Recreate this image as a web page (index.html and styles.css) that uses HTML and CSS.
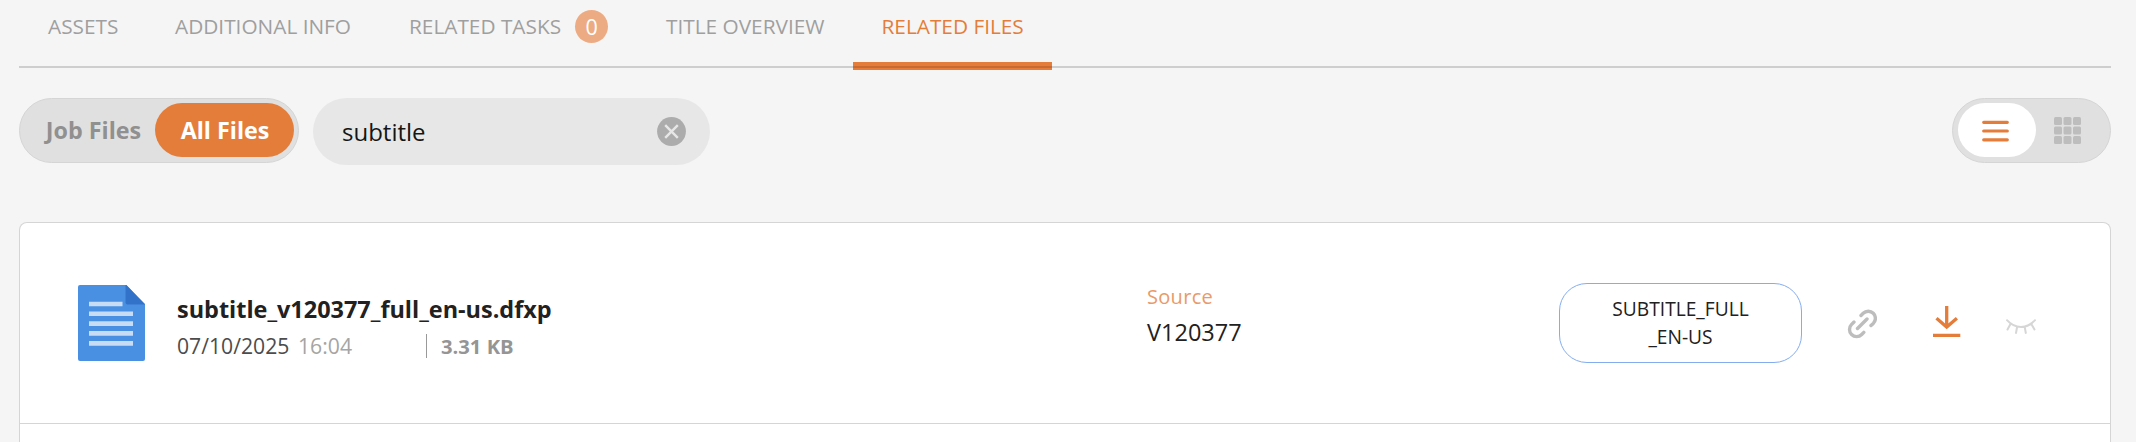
FILE: index.html
```html
<!DOCTYPE html>
<html lang="en">
<head>
<meta charset="utf-8">
<title>Related files</title>
<link rel="stylesheet" href="styles.css">
</head>
<body>
<nav class="tabs">
  <a class="tab tab-assets">ASSETS</a>
  <a class="tab tab-info">ADDITIONAL INFO</a>
  <a class="tab tab-tasks">RELATED TASKS <span class="badge">0</span></a>
  <a class="tab tab-overview">TITLE OVERVIEW</a>
  <a class="tab tab-files active">RELATED FILES</a>
</nav>
<div class="toolbar">
  <div class="scope">
    <button class="scope-option">Job Files</button>
    <button class="scope-option selected">All Files</button>
  </div>
  <div class="search">
    <span class="search-text">subtitle</span>
    <svg class="clear" viewBox="0 0 29 29"><circle cx="14.5" cy="14.5" r="14.4" fill="#acacac"/><path d="M8.2 8.2l12.6 12.6M20.8 8.2L8.2 20.8" stroke="#e7e7e7" stroke-width="2.4"/></svg>
  </div>
  <div class="view">
    <span class="view-list"><svg width="27" height="27" viewBox="0 0 27 27"><path d="M1.7 5.3h23.6M1.7 14h23.6M1.7 22.8h23.6" stroke="#e47d3a" stroke-width="3.2" stroke-linecap="round"/></svg></span>
    <span class="view-grid"><svg width="27" height="27" viewBox="0 0 27 27" fill="#bdbdbd"><rect x="0" y="0" width="8" height="8" rx="1.5"/><rect x="9.5" y="0" width="8" height="8" rx="1.5"/><rect x="19" y="0" width="8" height="8" rx="1.5"/><rect x="0" y="9.5" width="8" height="8" rx="1.5"/><rect x="9.5" y="9.5" width="8" height="8" rx="1.5"/><rect x="19" y="9.5" width="8" height="8" rx="1.5"/><rect x="0" y="19" width="8" height="8" rx="1.5"/><rect x="9.5" y="19" width="8" height="8" rx="1.5"/><rect x="19" y="19" width="8" height="8" rx="1.5"/></svg></span>
  </div>
</div>
<main class="files">
  <article class="file">
    <svg class="doc" viewBox="0 0 67 76"><path d="M2 0h46l19 19v55a2 2 0 0 1-2 2H2a2 2 0 0 1-2-2V2a2 2 0 0 1 2-2z" fill="#4a90e2"/><path d="M47.500 0H48.500L67 19.500H49.500a2 2 0 0 1-2-2z" fill="#3272c9"/><path d="M11 19h33.500M11 28.800h44M11 38.600h44M11 48.400h44M11 58.400h44" stroke="#c8dcf5" stroke-width="4.600"/></svg>
    <div class="info">
      <div class="name">subtitle_v120377_full_en-us.dfxp</div>
      <div class="meta"><span class="date">07/10/2025</span><span class="time">16:04</span><span class="size">3.31 KB</span></div>
    </div>
    <div class="source">
      <div class="source-label">Source</div>
      <div class="source-value">V120377</div>
    </div>
    <div class="chip">SUBTITLE_FULL<br>_EN-US</div>
    <div class="actions">
      <svg class="link" width="30" height="30" viewBox="0 0 30 30" fill="none" stroke="#bdbdbd" stroke-width="3.4" stroke-linecap="round"><path d="M10.500 19.500L20 10M14 6.500l2.200-2.200a7.100 7.100 0 0 1 10.100 10.100l-2.300 2.100M16.800 23.400l-2.100 2.100A7.100 7.100 0 0 1 4.600 15.400l2.400-2.300"/></svg>
      <svg class="download" width="28" height="32" viewBox="0 0 28 32" fill="none" stroke="#e47d3a" stroke-width="3.300"><path d="M13.700 0v21M3.500 12.300l10.200 8.700 10.200-8.700M0 29.300h27.300"/></svg>
      <svg class="hidden-eye" width="30" height="16" viewBox="0 0 30 16" fill="none" stroke="#d6d6d6" stroke-width="2" stroke-linecap="round"><path d="M1 1.200C9 10.200 21 10.200 29 1.200M4.500 5l-3 5.500M11 8.500l-1 5.500M18.800 8.500l1 5.500M25.300 5l3.200 5.500"/></svg>
    </div>
  </article>
</main>
</body>
</html>
```
FILE: styles.css
```css
* { box-sizing: border-box; }
body {
  margin: 0;
  height: 442px;
  overflow: hidden;
  padding: 0 25px 0 19px;
  background: #f5f5f5;
  color: #212121;
  font-family: "Open Sans", "Noto Sans", sans-serif;
}
.tabs {
  display: flex;
  height: 68px;
  border-bottom: 2px solid #cecece;
  color: #9f9f9f;
  font-size: 20.8px;
  line-height: 52px;
  white-space: nowrap;
}
.tab { display: flex; align-items: flex-start; }
.tab-assets { width: 127px; padding-left: 29px; }
.tab-info { width: 234px; padding-left: 29px; }
.tab-tasks { width: 257px; padding-left: 29px; }
.tab-overview { width: 216px; padding-left: 29px; }
.tab-files { width: 199px; padding-left: 28.500px; }
.tab.active {
  height: 70px;
  color: #e47d3a;
  background: linear-gradient(#e47d3a 0 4px, #c96b31 4px 6px, #e47d3a 6px 8px) no-repeat 0 100% / 100% 8px;
}
.badge {
  width: 33px;
  height: 33px;
  margin: 10px 0 0 14px;
  border-radius: 50%;
  background: #edab83;
  color: #fff;
  font-size: 21.500px;
  line-height: 34px;
  text-align: center;
}
.toolbar { display: flex; margin-top: 30px; height: 67px; }
.scope {
  display: flex;
  width: 280px;
  height: 65px;
  padding: 4px;
  border: 1px solid #d5d5d5;
  border-radius: 33px;
  background: #e0e0e0;
}
.scope-option {
  width: 131px;
  height: 54px;
  padding: 0 0 0 8px;
  border: 0;
  border-radius: 27px;
  background: none;
  color: #909090;
  font: 700 23.300px "Open Sans", "Noto Sans", sans-serif;
  white-space: nowrap;
}
.scope-option.selected { width: 139px; padding-left: 1px; background: #e47d3a; color: #fff; }
.search {
  display: flex;
  align-items: center;
  justify-content: space-between;
  width: 397px;
  margin-left: 14px;
  padding: 0 24px 0 29px;
  border-radius: 34px;
  background: #e7e7e7;
  color: #151515;
  font-size: 24px;
}
.clear { width: 29px; height: 29px; }
.view {
  display: flex;
  width: 159px;
  height: 65px;
  margin-left: auto;
  padding: 4px 5px;
  border: 1px solid #d5d5d5;
  border-radius: 33px;
  background: #e0e0e0;
}
.view span { display: flex; align-items: center; justify-content: center; height: 54px; }
.view .view-list { width: 78px; padding-right: 3px; border-radius: 27px; background: #fff; }
.view-grid { width: 63px; }
.files {
  height: 240px;
  margin-top: 57px;
  border: 1px solid #d5d5d5;
  border-bottom: 0;
  border-radius: 8px 8px 0 0;
  background: #fff;
}
.file { display: flex; height: 201px; padding-left: 58px; border-bottom: 1px solid #d5d5d5; }
.doc { width: 67px; height: 76px; margin-top: 62px; }
.info { width: 1002px; padding: 69px 0 0 32px; }
.name { font-size: 23.450px; font-weight: 700; line-height: 34px; }
.meta { display: flex; align-items: center; margin-top: 8px; font-size: 21.200px; line-height: 24px; color: #4c4c4c; }
.date { width: 121px; }
.time { width: 128px; color: #a5a5a5; }
.size { padding-left: 14px; border-left: 1px solid #999; color: #959595; font-weight: 700; font-size: 20.200px; }
.source { width: 412px; padding-top: 60px; }
.source-label { font-size: 20px; line-height: 28px; letter-spacing: .3px; color: #e99a68; }
.source-value { margin-top: 5px; font-size: 23.500px; line-height: 32px; }
.chip {
  width: 243px;
  height: 80px;
  margin-top: 60px;
  padding-top: 11px;
  border: 1px solid #84adf0;
  border-radius: 28px;
  font-size: 19.200px;
  line-height: 28px;
  text-align: center;
}
.actions { display: flex; align-items: flex-start; padding-left: 45px; }
.link { margin-top: 86px; }
.download { margin: 83px 0 0 56px; }
.hidden-eye { margin: 96px 0 0 45px; }
```
